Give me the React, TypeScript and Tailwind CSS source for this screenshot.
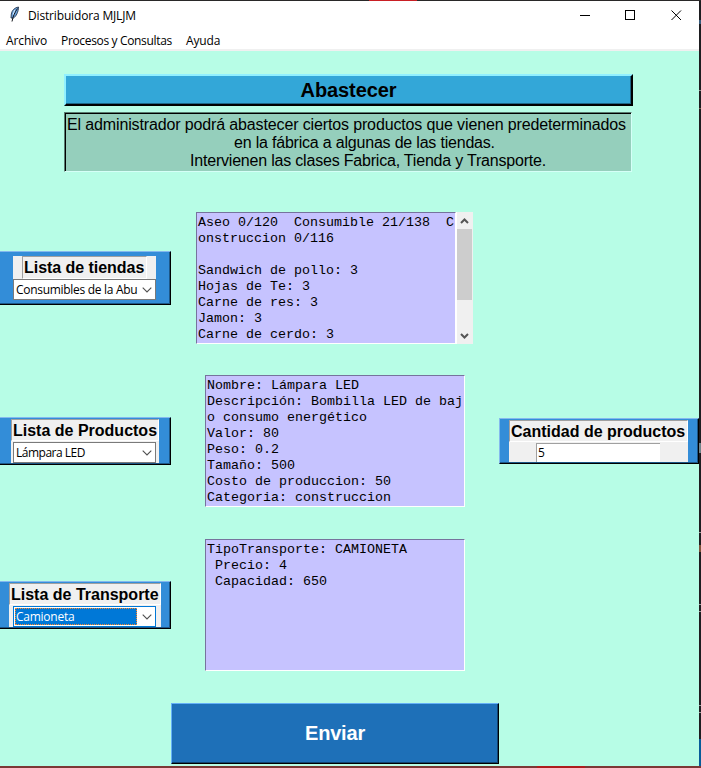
import type { ReactNode } from "react";

const ui = "font-['Open_Sans','Noto_Sans',sans-serif] text-[12px] whitespace-nowrap text-black";
const sans = "font-['Liberation_Sans',Arial,sans-serif]";

function Feather() {
  return (
    <svg width="11" height="17" viewBox="0 0 11 17">
      <path d="M9.5 1 C6 1.5 3 4 2.3 8 L2 12 L4.5 12 C7 10.5 9.5 6 9.5 1Z" fill="#6ca3de" stroke="#26374d" strokeWidth="0.9" />
      <path d="M8.5 2.5 C6 6 4 10 3 15.5" fill="none" stroke="#101318" strokeWidth="1" />
      <path d="M5.6 4 L4.2 8.5" stroke="#d8edff" strokeWidth="1" />
    </svg>
  );
}

function Chevron() {
  return (
    <svg width="10" height="6" viewBox="0 0 10 6" className="shrink-0">
      <path d="M0.7 0.7 L5 5 L9.3 0.7" fill="none" stroke="#505050" strokeWidth="1.1" />
    </svg>
  );
}

function TitleBar() {
  return (
    <div className="flex h-[30px] items-start bg-white">
      <div className="pt-[5px] pl-[9px]"><Feather /></div>
      <span className={`${ui} ml-[8px] pt-[6px] leading-[18px] tracking-[-0.16px]`}>Distribuidora MJLJM</span>
      <svg className="ml-auto mr-[17px] mt-[9px]" width="102" height="11" viewBox="0 0 102 11" fill="none" stroke="black">
        <path d="M0 5.5H10" />
        <rect x="45.5" y="0.5" width="9" height="9" />
        <path d="M91.5 0.5L101 10M101 0.5L91.5 10" />
      </svg>
    </div>
  );
}

function MenuBar() {
  return (
    <div className={`${ui} flex h-[20px] border-b-2 border-[#f0f0f0] bg-white pl-[6px] leading-[20px]`}>
      <span className="w-[55px] tracking-[-0.12px]">Archivo</span>
      <span className="w-[125px] tracking-[-0.34px]">Procesos y Consultas</span>
      <span className="tracking-[-0.15px]">Ayuda</span>
    </div>
  );
}

function Panel({ className, children }: { className: string; children: ReactNode }) {
  return (
    <div className={`border-t border-t-[#84b9ee] border-r border-r-black border-b border-b-black bg-[#338dd8] shadow-[inset_-1px_-1px_0_#1d5787] ${className}`}>
      {children}
    </div>
  );
}

function Heading({ children, className }: { children: ReactNode; className: string }) {
  return (
    <div className={`${sans} border border-t-[#a0a0a0] border-r-white border-b-white border-l-[#a0a0a0] bg-[#f0f0f0] pl-px text-[16px] font-bold whitespace-nowrap text-black ${className}`}>
      {children}
    </div>
  );
}

function Combo({ value, tracking }: { value: string; tracking: string }) {
  return (
    <div className="flex h-[21px] w-[143px] items-center border border-[#7a7a7a] bg-white pl-[2px] pr-[3px]">
      <span className={`${ui} ${tracking} w-[121px] leading-[18px]`}>{value}</span>
      <span className="ml-auto"><Chevron /></span>
    </div>
  );
}

function TextBox({ lines, className }: { lines: string[]; className: string }) {
  return (
    <div className={`h-[132px] overflow-hidden border border-t-[#76739d] border-r-white border-b-white border-l-[#76739d] bg-[#c6c3ff] pt-[2px] pl-[1px] font-['Liberation_Mono','Courier_New',monospace] text-[13.333px] leading-[16px] whitespace-pre text-black ${className}`}>
      {lines.map((line, i) => (
        <div key={i} className="h-[16px]">{line}</div>
      ))}
    </div>
  );
}

function ScrollBar() {
  return (
    <div className="flex h-[132px] w-[16px] flex-col items-center bg-[#f0f0f0]">
      <svg width="16" height="17" viewBox="0 0 16 17" className="shrink-0">
        <path d="M4 11 L7.5 7.5 L11 11" fill="none" stroke="#555" strokeWidth="2" />
      </svg>
      <div className="h-[71px] w-[15px] self-start bg-[#cdcdcd]" />
      <svg width="16" height="17" viewBox="0 0 16 17" className="mt-auto shrink-0">
        <path d="M4 7 L7.5 10.5 L11 7" fill="none" stroke="#555" strokeWidth="2" />
      </svg>
    </div>
  );
}

const storeLines = [
  "Aseo 0/120  Consumible 21/138  C",
  "onstruccion 0/116",
  "",
  "Sandwich de pollo: 3",
  "Hojas de Te: 3",
  "Carne de res: 3",
  "Jamon: 3",
  "Carne de cerdo: 3",
];
const productLines = [
  "Nombre: Lámpara LED",
  "Descripción: Bombilla LED de baj",
  "o consumo energético",
  "Valor: 80",
  "Peso: 0.2",
  "Tamaño: 500",
  "Costo de produccion: 50",
  "Categoria: construccion",
];
const transportLines = ["TipoTransporte: CAMIONETA", " Precio: 4", " Capacidad: 650"];

export default function App() {
  return (
    <div className="flex h-[768px] w-[701px] flex-col overflow-hidden bg-[#202020]">
      <div className="flex h-px shrink-0 bg-[#292828]">
        <div className="ml-[369px] w-[48px] bg-[#c91f24]" />
      </div>
      <div className="flex h-[765px] shrink-0">
        <div className="flex w-[699px] flex-col bg-[#b7fde6]">
          <TitleBar />
          <MenuBar />
          <div className={`${sans} mt-[23px] ml-[64px] flex h-[32px] w-[569px] justify-center border-2 border-t-[#91f0ff] border-r-black border-b-black border-l-[#91f0ff] bg-[#33a7d8] text-[20px] leading-[29px] font-bold tracking-[-0.1px] text-black shadow-[inset_-1px_-1px_0_#1d6687]`}>
            Abastecer
          </div>
          <div className="mt-[6px] ml-[64px] h-[60px] w-[568px] border border-t-[#5a7c70] border-r-[#d5fff7] border-b-[#d5fff7] border-l-[#5a7c70] bg-[#95cfbc]">
            <div className={`${sans} h-[58px] border-t border-l border-black pt-[2px] text-[16px] leading-[18px] whitespace-nowrap text-black`}>
              <div className="pl-[1px] tracking-[-0.135px]">El administrador podrá abastecer ciertos productos que vienen predeterminados</div>
              <div className="pl-[168px] tracking-[-0.2px]">en la fábrica a algunas de las tiendas.</div>
              <div className="pl-[124px] tracking-[-0.2px]">Intervienen las clases Fabrica, Tienda y Transporte.</div>
            </div>
          </div>

          <div className="mt-[40px] flex h-[132px] items-start">
            <Panel className="mt-[39px] h-[54px] w-[171px] pt-[4px] pl-[13px]">
              <div className="flex h-[23px] w-[143px] justify-center bg-[#f0f0f0]">
                <Heading className="h-[23px] w-[125px] leading-[22px] tracking-[-0.04px]">Lista de tiendas</Heading>
              </div>
              <Combo value="Consumibles de la Abu" tracking="tracking-[-0.3px]" />
            </Panel>
            <TextBox lines={storeLines} className="ml-[25px] w-[260px]" />
            <div className="w-px self-stretch bg-white" />
            <ScrollBar />
          </div>

          <div className="mt-[31px] flex h-[132px] items-start">
            <Panel className="mt-[42px] h-[48px] w-[171px] pt-[1px] pl-[11px]">
              <div className="h-[44px] w-[148px] bg-[#f0f0f0]">
                <Heading className="h-[22px] pl-0 leading-[21px]">Lista de Productos</Heading>
                <div className="mt-px pl-[2px]"><Combo value="Lámpara LED" tracking="tracking-[-0.5px]" /></div>
              </div>
            </Panel>
            <TextBox lines={productLines} className="ml-[34px] w-[260px]" />
            <Panel className="mt-[43px] ml-[34px] h-[46px] w-[200px] border-l border-l-[#84b9ee] pt-[1px] pl-[9px]">
              <div className="h-[42px] w-[179px] bg-[#f0f0f0]">
                <Heading className="h-[22px] leading-[21px]">Cantidad de productos</Heading>
                <div className={`${ui} mt-px ml-[27px] h-[19px] w-[124px] border-t border-l border-[#a0a0a0] bg-white pl-[1px] leading-[18px]`}>5</div>
              </div>
            </Panel>
          </div>

          <div className="mt-[32px] flex h-[132px] items-start">
            <Panel className="mt-[42px] h-[48px] w-[171px] pt-[1px] pl-[9px]">
              <div className="h-[44px] w-[152px] bg-[#f0f0f0]">
                <Heading className="h-[22px] leading-[21px]">Lista de Transporte</Heading>
                <div className="mt-px ml-[4px] flex h-[21px] w-[143px] items-center border border-[#0078d7] bg-white pl-px pr-[3px]">
                  <div className={`${ui} h-[17px] w-[122px] border border-dotted border-[#ff8728] bg-[#0078d7] leading-[16px]`}>
                    <span className="tracking-[-0.25px] text-white">Camioneta</span>
                  </div>
                  <span className="ml-auto"><Chevron /></span>
                </div>
              </div>
            </Panel>
            <TextBox lines={transportLines} className="ml-[34px] w-[260px]" />
          </div>

          <button className={`${sans} mt-[32px] ml-[171px] h-[61px] w-[328px] border-t border-r border-b border-l border-t-[#64b0f8] border-r-black border-b-black border-l-[#64b0f8] bg-[#1e70b8] pb-[2px] text-[20px] font-bold tracking-[-0.2px] text-white shadow-[inset_-1px_-1px_0_#124470]`}>
            Enviar
          </button>
        </div>
        <div className="flex w-[2px] flex-col bg-[#1d1d20]">
          <div className="mt-[19px] h-[4px] bg-[#365b7b]" />
          <div className="mt-[66px] h-px bg-[#8b8b8b]" />
          <div className="mt-[17px] h-px bg-[#79604c]" />
          <div className="mt-[334px] h-[10px] bg-[#70858b]" />
          <div className="mt-[79px] h-px bg-[#999]" />
          <div className="mt-[12px] h-[7px] bg-[#80533a]" />
          <div className="mt-[52px] h-px bg-[#999]" />
          <div className="mt-[6px] h-px bg-[#999]" />
          <div className="mt-[93px] h-px bg-[#999]" />
          <div className="mt-[6px] h-px bg-[#999]" />
          <div className="mt-[26px] h-[27px] bg-[#075c99]" />
        </div>
      </div>
      <div className="flex h-[2px] shrink-0 bg-[#7b3835]">
        <div className="ml-[537px] w-[48px] bg-[#ad1d1d]" />
      </div>
    </div>
  );
}
